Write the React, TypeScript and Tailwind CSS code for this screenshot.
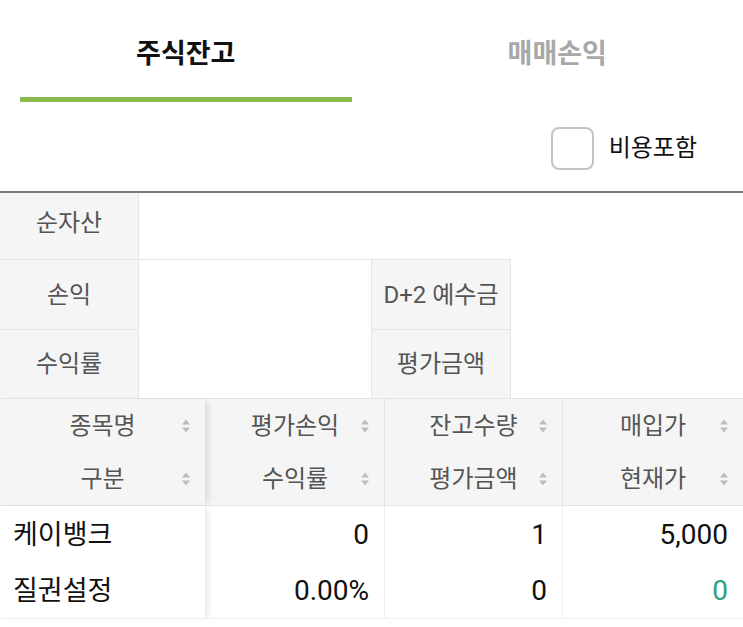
import { useState } from "react";

const font = { fontFamily: 'Roboto, "Noto Sans CJK KR", sans-serif' };

function SortIcon() {
  return (
    <svg width="10" height="15" viewBox="0 0 10 15" className="text-[#bdbdbd]">
      <path d="M5 1 L9 6 L1 6 Z" fill="currentColor" />
      <path d="M5 14 L9 9 L1 9 Z" fill="currentColor" />
    </svg>
  );
}

const headers = [
  ["종목명", "구분"],
  ["평가손익", "수익률"],
  ["잔고수량", "평가금액"],
  ["매입가", "현재가"],
];

const rows = [
  { name: "케이뱅크", cells: ["0", "1", "5,000"] },
  { name: "질권설정", cells: ["0.00%", "0", "0"] },
];

function HeadCell({ label }: { label: string }) {
  return (
    <div className="relative flex h-[53px] items-center justify-center">
      <span>{label}</span>
      <span className="absolute right-[14px] top-1/2 -translate-y-1/2 flex">
        <SortIcon />
      </span>
    </div>
  );
}

export default function App() {
  const [tab, setTab] = useState(0);
  const [withFee, setWithFee] = useState(false);

  return (
    <div className="w-[743px] h-[627px] bg-white overflow-hidden" style={font}>
      {/* tabs */}
      <div className="flex h-[102px]">
        {["주식잔고", "매매손익"].map((t, i) => (
          <button
            key={t}
            onClick={() => setTab(i)}
            className="flex-1 flex flex-col items-stretch px-[20px]"
          >
            <span
              className={`pt-[35px] h-[97px] text-[27px] font-bold leading-[38px] ${
                tab === i ? "text-[#111]" : "text-[#a8a8a8]"
              }`}
            >
              {t}
            </span>
            <span className={`h-[5px] ${tab === i ? "bg-[#8cba4c]" : ""}`} />
          </button>
        ))}
      </div>

      {/* fee toggle */}
      <div className="flex h-[89px] items-center justify-end pr-[46px] pt-[3px]">
        <button onClick={() => setWithFee(!withFee)} className="flex items-center gap-[15px]">
          <span
            className={`w-[43px] h-[43px] rounded-[8px] border-2 ${
              withFee ? "border-[#8cba4c] bg-[#8cba4c]" : "border-[#c4c4c4]"
            }`}
          />
          <span className="text-[24px] text-[#111]">비용포함</span>
        </button>
      </div>

      {/* summary */}
      <div className="border-t-2 border-[#7a7a7a] text-[24px] text-[#555]">
        <div className="flex h-[66px]">
          <div className="w-[139px] flex items-center justify-center bg-[#f5f5f5] border-r border-[#e4e4e4] pb-[6px]">
            순자산
          </div>
        </div>
        <div className="flex h-[139px]">
          <div className="w-[139px] flex flex-col bg-[#f5f5f5] border-r border-[#e4e4e4]">
            <div className="h-[70px] flex items-center justify-center border-t border-[#e4e4e4]">손익</div>
            <div className="h-[69px] flex items-center justify-center border-t border-[#e4e4e4]">수익률</div>
          </div>
          <div className="w-[232px] border-t border-[#e4e4e4]" />
          <div className="w-[140px] flex flex-col bg-[#f5f5f5] border-x border-[#e4e4e4]">
            <div className="h-[70px] flex items-center justify-center border-t border-[#e4e4e4]">D+2 예수금</div>
            <div className="h-[69px] flex items-center justify-center border-t border-[#e4e4e4]">평가금액</div>
          </div>
        </div>
      </div>

      {/* holdings table */}
      <div className="grid grid-cols-[206px_179px_178px_180px] border-t border-[#e4e4e4]">
        {headers.map((h, i) => (
          <div
            key={h[0]}
            className={`bg-[#f5f5f5] text-[24px] text-[#555] border-b border-[#e4e4e4] ${
              i === 0
                ? "relative z-10 border-r border-[#dcdcdc] shadow-[5px_0_7px_-3px_rgba(0,0,0,0.12)]"
                : i < 3
                ? "border-r border-[#e6e6e6]"
                : ""
            }`}
          >
            <HeadCell label={h[0]} />
            <HeadCell label={h[1]} />
          </div>
        ))}

        <div className="relative z-10 bg-white border-r border-[#e6e6e6] border-b border-[#eeeeee] shadow-[5px_0_7px_-3px_rgba(0,0,0,0.1)] text-[27px] text-[#111]">
          {rows.map((r) => (
            <div key={r.name} className="h-[56px] flex items-center pl-[13px] pt-[2px]">
              {r.name}
            </div>
          ))}
        </div>
        {[0, 1, 2].map((c) => (
          <div
            key={c}
            className={`border-b border-[#eeeeee] text-[28px] text-[#111] ${c < 2 ? "border-r border-[#efefef]" : ""}`}
          >
            {rows.map((r, ri) => (
              <div
                key={r.name}
                className={`h-[56px] flex items-center justify-end pr-[15px] pt-[2px] ${
                  c === 2 && ri === 1 ? "text-[#2f9e83]" : ""
                }`}
              >
                {r.cells[c]}
              </div>
            ))}
          </div>
        ))}
      </div>
    </div>
  );
}
